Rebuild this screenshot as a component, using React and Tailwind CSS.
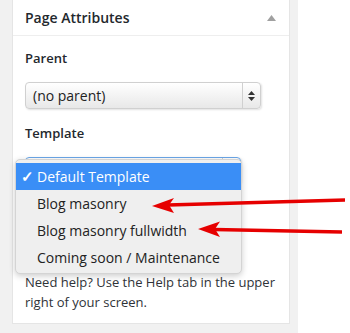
import React from 'react'

const options = ['Default Template', 'Blog masonry', 'Blog masonry fullwidth', 'Coming soon / Maintenance']

function SelectBox({ label, focused, width }) {
    return (
        <div
            className={`relative flex h-[27px] items-center rounded-[4px] border bg-gradient-to-b from-white to-[#e8e8e8] shadow-[1px_1px_2px_rgba(0,0,0,0.12)] ${width} ${focused ? 'border-[#6aa6e8]' : 'border-[#d0d0d0]'}`}
        >
            <span className="flex-1 pl-[7px] text-[14px] text-[#222]">{label}</span>
            <div className="flex h-full w-[18px] flex-col items-center justify-center gap-[2px] border-l border-[#d0d0d0]">
                <svg width="7" height="4" viewBox="0 0 7 4"><path d="M3.5 0L7 4H0z" fill="#333" /></svg>
                <svg width="7" height="4" viewBox="0 0 7 4"><path d="M0 0h7L3.5 4z" fill="#333" /></svg>
            </div>
        </div>
    )
}

export default function App() {
    return (
        <div className="relative flex h-[333px] w-[350px] bg-white font-['Open_Sans',sans-serif] text-[#23282d]">
            <div className="flex h-full w-[298px] flex-col bg-[#f1f1f1] pl-[12px] pr-[8px]">
                <div className="flex flex-col border border-t-0 border-[#e5e5e5] bg-white">
                    <div className="flex h-[36px] items-center justify-between border-b border-[#eeeeee] pl-[12px] pr-[13px]">
                        <span className="text-[14px] font-semibold">Page Attributes</span>
                        <svg width="9" height="6" viewBox="0 0 9 6"><path d="M4.5 0L9 6H0z" fill="#a0a0a0" /></svg>
                    </div>
                    <div className="flex flex-col px-[12px] pb-[11px]">
                        <div className="mt-[13px] text-[13px] font-semibold leading-[18px]">Parent</div>
                        <div className="mt-[15px]">
                            <SelectBox label="(no parent)" width="w-[236px]" />
                        </div>
                        <div className="mt-[15px] text-[13px] font-semibold leading-[18px]">Template</div>
                        <div className="mt-[15px]">
                            <SelectBox label="" focused width="w-[216px]" />
                        </div>
                        <div className="h-[88px]" />
                        <p className="text-[13px] leading-[20px] text-[#2f3338]">
                            Need help? Use the Help tab in the upper right of your screen.
                        </p>
                    </div>
                </div>
            </div>

            <div className="absolute left-[15px] top-[159px] flex w-[227px] flex-col rounded-[5px] border border-[#d4d4d4] bg-[#efefef] pb-[2px] pt-[3px] shadow-[0_2px_6px_rgba(0,0,0,0.2)]">
                {options.map((opt, i) => (
                    <div
                        key={i}
                        className={`flex h-[27px] items-center text-[14px] ${i === 0 ? 'bg-[#3a8ef6] text-white' : 'text-[#222]'}`}
                    >
                        <span className="w-[21px] pl-[5px] text-[15px] font-bold">{i === 0 ? '✓' : ''}</span>
                        <span>{opt}</span>
                    </div>
                ))}
            </div>

            <svg className="pointer-events-none absolute left-0 top-0" width="350" height="333" viewBox="0 0 350 333">
                <line x1="345" y1="200" x2="168" y2="205" stroke="#e60000" strokeWidth="3.5" />
                <path d="M152 206 L174 198 L169 205 L174 213 Z" fill="#e60000" />
                <line x1="342" y1="232" x2="214" y2="229.5" stroke="#e60000" strokeWidth="3.5" />
                <path d="M198 229 L220 221.5 L215 229 L220 237 Z" fill="#e60000" />
            </svg>
        </div>
    )
}
